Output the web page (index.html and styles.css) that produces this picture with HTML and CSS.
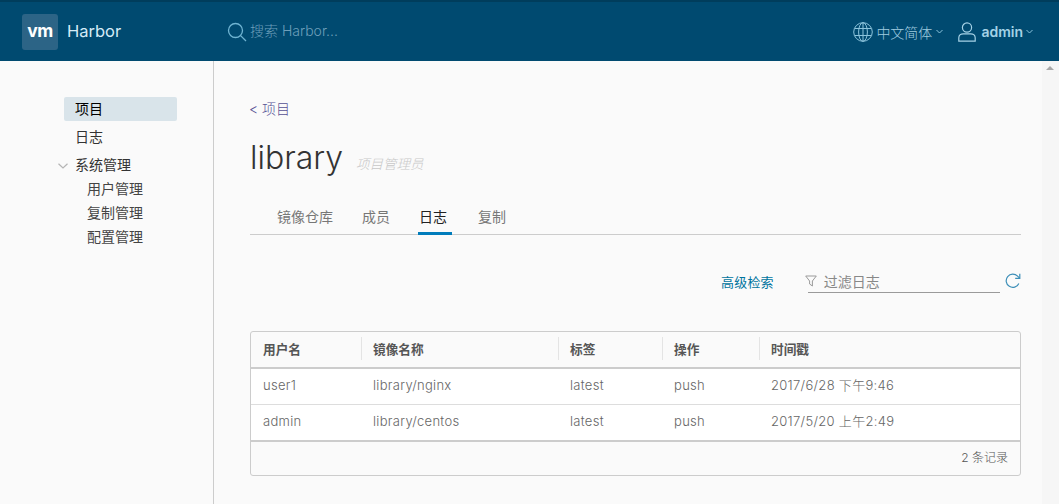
FILE: index.html
```html
<!DOCTYPE html>
<html lang="zh-CN">
<head>
<meta charset="utf-8">
<title>Harbor</title>
<link rel="stylesheet" href="styles.css">
</head>
<body>
<header class="topbar">
  <div class="brand">
    <span class="logo">vm</span>
    <span class="brand-name">Harbor</span>
  </div>
  <div class="search">
    <svg class="search-icon" width="20" height="20" viewBox="0 0 20 20" fill="none" stroke="#6fb4d2" stroke-width="1.3"><circle cx="8.5" cy="8.5" r="7"/><path d="M13.6 13.6 19 19"/></svg>
    <span>搜索 Harbor...</span>
  </div>
  <div class="top-actions">
    <div class="lang">
      <svg width="20" height="20" viewBox="0 0 20 20" fill="none" stroke="#8cc4dc" stroke-width="1"><circle cx="10" cy="10" r="9.3"/><ellipse cx="10" cy="10" rx="4.4" ry="9.3"/><path d="M10 .7v18.6M1.6 6.5h16.8M1.6 13.5h16.8"/></svg>
      <span class="lang-label">中文简体</span>
      <svg class="chev" width="7" height="5" viewBox="0 0 7 5" fill="none" stroke="#8cc4dc"><path d="M.5 1 3.5 4l3-3"/></svg>
    </div>
    <div class="user">
      <svg width="18" height="20" viewBox="0 0 18 20" fill="none" stroke="#a5d2e6" stroke-width="1.2"><circle cx="9" cy="5.5" r="4.6"/><path d="M.8 19.2v-3.4c0-2.6 2.2-4 4.4-4h7.6c2.2 0 4.4 1.4 4.4 4v3.4z"/></svg>
      <span class="user-name">admin</span>
      <svg class="chev" width="7" height="5" viewBox="0 0 7 5" fill="none" stroke="#8cc4dc"><path d="M.5 1 3.5 4l3-3"/></svg>
    </div>
  </div>
</header>
<div class="layout">
  <nav class="sidenav">
    <a class="nav-item active">项目</a>
    <a class="nav-item log">日志</a>
    <div class="nav-group">
      <svg class="nav-chev" width="10" height="6" viewBox="0 0 10 6" fill="none" stroke="#b5b5b5" stroke-width="1.2"><path d="M.5.7 5 5l4.5-4.3"/></svg>
      <span>系统管理</span>
    </div>
    <a class="nav-sub">用户管理</a>
    <a class="nav-sub">复制管理</a>
    <a class="nav-sub">配置管理</a>
  </nav>
  <main class="content">
    <a class="back">&lt; 项目</a>
    <div class="title-row">
      <h1>library</h1>
      <span class="role">项目管理员</span>
    </div>
    <ul class="tabs">
      <li>镜像仓库</li>
      <li class="members">成员</li>
      <li class="current">日志</li>
      <li class="replication">复制</li>
    </ul>
    <div class="filter-row">
      <a class="advanced">高级检索</a>
      <div class="filter">
        <svg width="12" height="12" viewBox="0 0 12 12" fill="none" stroke="#9a9a9a"><path d="M.7 1h10.6L7.4 6v5L4.6 9V6z"/></svg>
        <span>过滤日志</span>
      </div>
      <svg class="refresh" width="16" height="16" viewBox="0 0 16 16" fill="none" stroke="#3d8fb8" stroke-width="1.2"><path d="M13.8 10.5A6.6 6.6 0 1 1 12.6 3.2L14.6 5.2"/><path d="M14.8 .8v4.6h-4.6"/></svg>
    </div>
    <div class="grid">
      <div class="row head">
        <div class="c1">用户名</div>
        <div class="c2">镜像名称</div>
        <div class="c3">标签</div>
        <div class="c4">操作</div>
        <div class="c5">时间戳</div>
      </div>
      <div class="body">
        <div class="row">
          <div class="c1">user1</div>
          <div class="c2">library/nginx</div>
          <div class="c3">latest</div>
          <div class="c4">push</div>
          <div class="c5">2017/6/28 下午9:46</div>
        </div>
        <div class="row">
          <div class="c1">admin</div>
          <div class="c2">library/centos</div>
          <div class="c3">latest</div>
          <div class="c4">push</div>
          <div class="c5">2017/5/20 上午2:49</div>
        </div>
      </div>
      <div class="foot">2 条记录</div>
    </div>
  </main>
  <div class="scrollbar"><span class="arrow"></span></div>
</div>
</body>
</html>
```
FILE: styles.css
```css
* { box-sizing: border-box; }
html, body { margin: 0; height: 100%; overflow: hidden; }
body {
  background: #fafafa;
  color: #565656;
  font-family: "Inter", "Noto Sans CJK SC", sans-serif;
  font-size: 14px;
  font-weight: 300;
}
.topbar {
  height: 61px;
  background: #004a70;
  border-top: 2px solid #003d5c;
  display: flex;
  align-items: center;
  padding-left: 22px;
}
.brand { display: flex; align-items: center; width: 205px; }
.logo {
  width: 36px;
  height: 36px;
  background: #2c6486;
  border-radius: 3px;
  color: #fff;
  font: 700 17.5px/34px "Inter", sans-serif;
  letter-spacing: -.6px;
  text-align: center;
}
.brand-name { margin-left: 9px; padding-bottom: 2px; color: #d5ecf7; font-size: 16.5px; font-weight: 400; }
.search { display: flex; align-items: center; gap: 3px; color: #6d9fba; font-size: 14px; line-height: 18px; }
.search span { padding-bottom: 2px; }
.top-actions { margin-left: auto; display: flex; align-items: center; padding-right: 26px; }
.lang, .user { display: flex; align-items: center; }
.lang-label { margin-left: 3px; color: #a0cde0; font-size: 14px; }
.lang .chev { margin-left: 4px; }
.user { margin-left: 15px; }
.user-name { margin-left: 5px; color: #a5d2e6; font-size: 14px; font-weight: 600; }
.user .chev { margin-left: 3px; }
.layout { display: flex; height: 443px; }
.sidenav {
  width: 214px;
  flex: none;
  border-right: 1px solid #ccc;
  padding: 36px 36px 0 64px;
  color: #333;
  display: flex;
  flex-direction: column;
}
.nav-item { height: 24px; line-height: 24px; padding-left: 11px; font-size: 14px; font-weight: 400; }
.nav-item.active { background: #d9e4ea; color: #000; border-radius: 2px; }
.nav-item.log { margin-top: 4px; color: #333; }
.nav-group { position: relative; height: 24px; line-height: 24px; margin-top: 4px; padding-left: 11px; font-size: 14px; font-weight: 400; }
.nav-chev { position: absolute; left: -6px; top: 10px; }
.nav-sub { height: 24px; line-height: 24px; padding-left: 23px; font-size: 14px; font-weight: 400; color: #444; }
.content { flex: 1; min-width: 0; padding: 36px 21px 0 36px; }
.back { display: block; height: 24px; line-height: 24px; color: #565194; font-size: 14px; margin-left: -1px; }
.title-row { display: flex; align-items: baseline; margin-top: 14px; height: 46px; }
h1 { margin: 0; font-size: 32px; line-height: 46px; font-weight: 300; color: #333; }
.role { margin-left: 13px; color: #c8c8c8; font-size: 13.5px; font-style: italic; }
.tabs {
  list-style: none;
  margin: 14px 0 0;
  padding: 0 0 0 27px;
  display: flex;
  gap: 28px;
  height: 40px;
  border-bottom: 1px solid #ccc;
}
.tabs li { height: 40px; padding-top: 9px; line-height: 26px; font-size: 14px; font-weight: 400; color: #777; }
.tabs li.members { margin-left: 1px; }
.tabs li.current { color: #222; border-bottom: 3px solid #007cbb; padding-left: 1px; padding-right: 5px; }
.tabs li.replication { margin-left: -2px; }
.filter-row { display: flex; align-items: center; height: 24px; margin-top: 34px; padding-left: 471px; }
.advanced { color: #00749e; font-size: 13px; font-weight: 400; letter-spacing: .2px; }
.filter {
  display: flex;
  align-items: center;
  gap: 7px;
  width: 192px;
  height: 24px;
  margin-left: 34px;
  border-bottom: 1px solid #9a9a9a;
  color: #888;
  font-size: 14px;
  font-weight: 400;
}
.filter svg { margin-left: -3px; }
.refresh { margin-left: 5px; }
.grid {
  margin-top: 38px;
  border: 1px solid #ccc;
  border-radius: 3px;
  height: 145px;
  background: #fafafa;
}
.row { display: grid; grid-template-columns: 110px 197px 104px 97px 1fr; }
.row > div { padding-left: 12px; }
.head { height: 37px; border-bottom: 2px solid #ccc; line-height: 35px; font-size: 12.7px; font-weight: 700; color: #565656; }
.head > div { position: relative; }
.head > div + div::before {
  content: "";
  position: absolute;
  left: 0;
  top: 5px;
  height: 23px;
  width: 1px;
  background: #e4e4e4;
}
.body { background: #fff; }
.body .row { height: 36px; line-height: 33px; border-bottom: 1px solid #ddd; font-size: 13px; letter-spacing: .3px; color: #666; }
.body .row:last-child { height: 37px; border-bottom: 2px solid #ccc; }
.foot { height: 33px; line-height: 31px; text-align: right; padding-right: 12px; font-size: 12px; color: #555; }
.scrollbar { position: relative; flex: none; width: 17px; background: #f6f6f6; }
.arrow {
  position: absolute;
  left: 4px;
  top: 5px;
  border-left: 4px solid transparent;
  border-right: 4px solid transparent;
  border-bottom: 4px solid #a8a8a8;
}
```
